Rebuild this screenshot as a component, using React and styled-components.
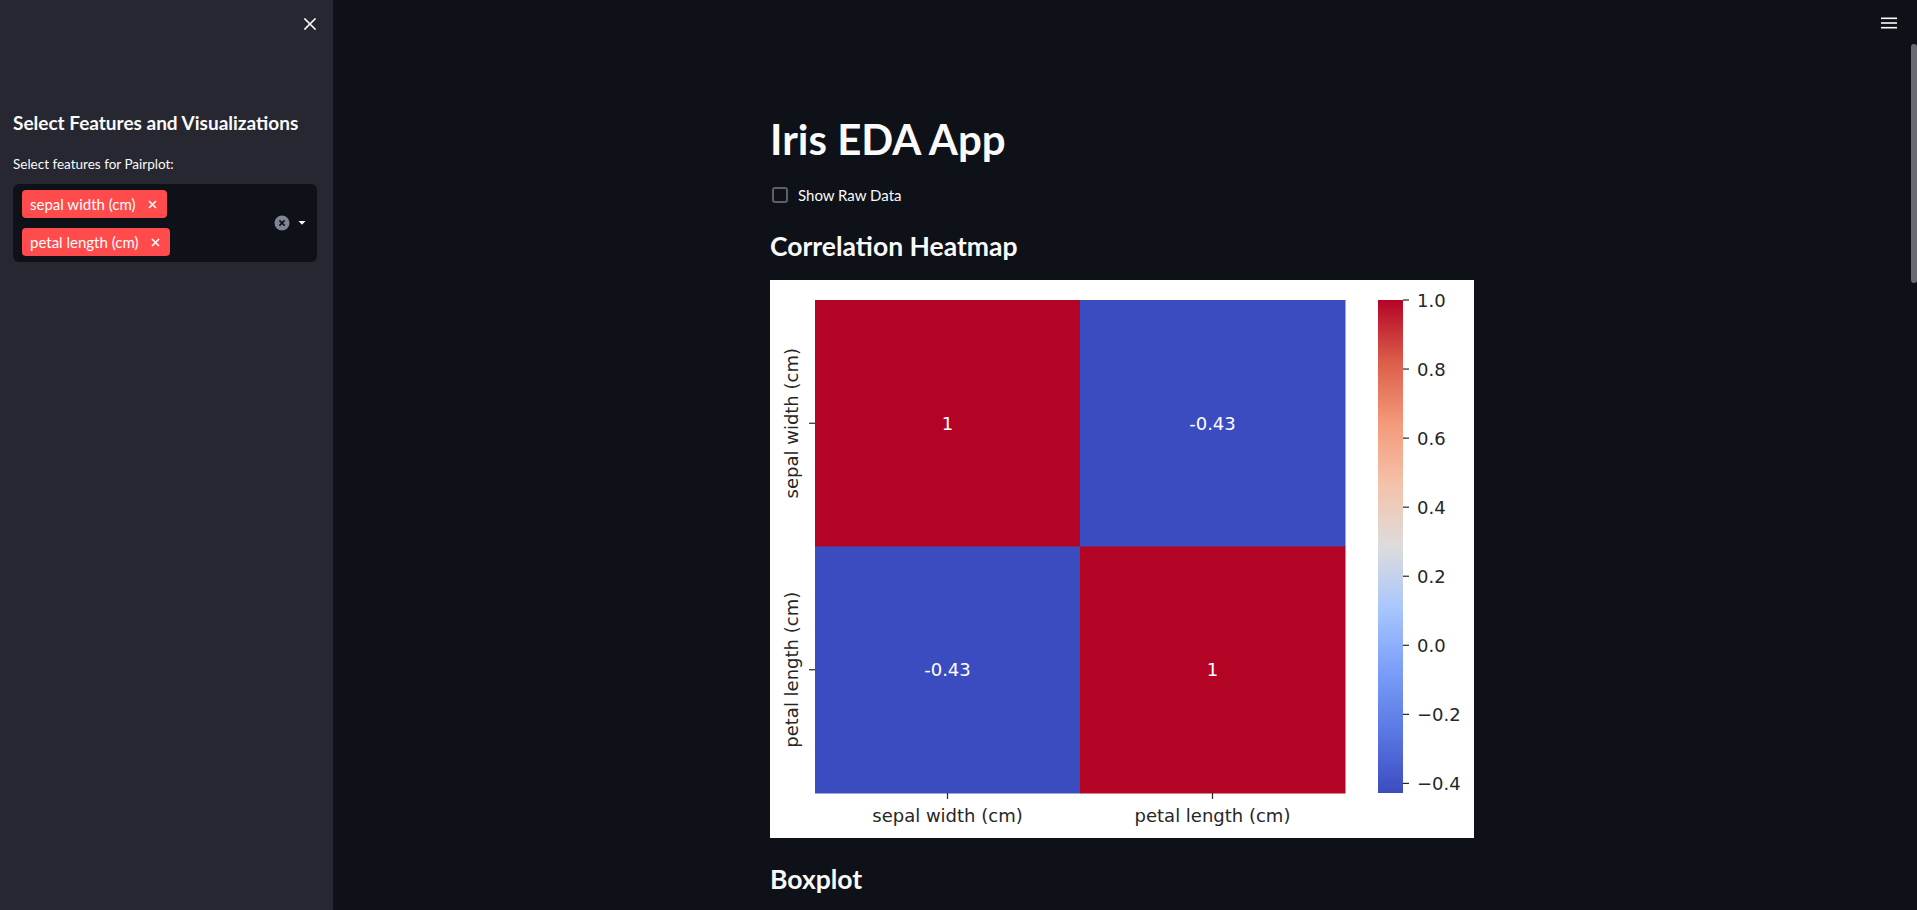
import React from 'react';
import styled, { createGlobalStyle } from 'styled-components';

const FEATURES = ['sepal width (cm)', 'petal length (cm)'];
const CORR = [
  [1, -0.43],
  [-0.43, 1],
];
const RED = '#b40426';
const BLUE = '#3b4cc0';
const VMIN = -0.4278;
const VMAX = 1;

// chart geometry, in the figure's own pixels (704 x 558)
const PLOT = { x0: 45, x1: 575, y0: 20, y1: 513 };
const BAR = { x0: 608, x1: 633 };
const BAR_TICKS = [1.0, 0.8, 0.6, 0.4, 0.2, 0.0, -0.2, -0.4];
const FONT = 18;

const GlobalStyle = createGlobalStyle`
  html, body {
    margin: 0;
    padding: 0;
    height: 100%;
    overflow: hidden;
    background: #0e1117;
  }
  body {
    font-family: Lato, "Noto Sans", sans-serif;
    color: #fafafa;
  }
`;

const cellColor = (v) => (v > 0.5 ? RED : BLUE);
const barY = (v) => PLOT.y0 + ((VMAX - v) / (VMAX - VMIN)) * (PLOT.y1 - PLOT.y0);
const fmtTick = (v) => (v < 0 ? '\u2212' + Math.abs(v).toFixed(1) : v.toFixed(1));

const Heatmap = () => {
  const cw = (PLOT.x1 - PLOT.x0) / FEATURES.length;
  const ch = (PLOT.y1 - PLOT.y0) / FEATURES.length;
  return (
    <ChartSvg viewBox="0 0 704 558" width="704" height="558">
      <defs>
        <linearGradient id="coolwarm" x1="0" y1="1" x2="0" y2="0">
          <stop offset="0" stopColor="#3b4cc0" />
          <stop offset="0.125" stopColor="#5a78e4" />
          <stop offset="0.25" stopColor="#7b9ff9" />
          <stop offset="0.375" stopColor="#a9c6fd" />
          <stop offset="0.5" stopColor="#dddcdc" />
          <stop offset="0.625" stopColor="#f5c2aa" />
          <stop offset="0.75" stopColor="#f49a7b" />
          <stop offset="0.875" stopColor="#dc5d4a" />
          <stop offset="1" stopColor="#b40426" />
        </linearGradient>
      </defs>
      <rect x="0" y="0" width="704" height="558" fill="#ffffff" />
      {CORR.map((row, r) =>
        row.map((v, c) => (
          <g key={`${r}-${c}`}>
            <rect
              x={PLOT.x0 + c * cw}
              y={PLOT.y0 + r * ch}
              width={cw + 0.5}
              height={ch + 0.5}
              fill={cellColor(v)}
            />
            <text
              x={PLOT.x0 + c * cw + cw / 2}
              y={PLOT.y0 + r * ch + ch / 2}
              fill="#ffffff"
              fontSize={FONT}
              textAnchor="middle"
              dominantBaseline="central"
            >
              {v === 1 ? '1' : v.toFixed(2)}
            </text>
          </g>
        ))
      )}
      {FEATURES.map((f, i) => {
        const cx = PLOT.x0 + i * cw + cw / 2;
        const cy = PLOT.y0 + i * ch + ch / 2;
        return (
          <g key={f}>
            <line x1={PLOT.x0 - 6} x2={PLOT.x0} y1={cy} y2={cy} stroke="#262626" strokeWidth="1.2" />
            <text
              transform={`translate(21 ${cy}) rotate(-90)`}
              textAnchor="middle"
              dominantBaseline="central"
              fontSize={FONT}
              fill="#262626"
            >
              {f}
            </text>
            <line x1={cx} x2={cx} y1={PLOT.y1} y2={PLOT.y1 + 6} stroke="#262626" strokeWidth="1.2" />
            <text x={cx} y={PLOT.y1 + 29} textAnchor="middle" fontSize={FONT} fill="#262626">
              {f}
            </text>
          </g>
        );
      })}
      <rect
        x={BAR.x0}
        y={PLOT.y0}
        width={BAR.x1 - BAR.x0}
        height={PLOT.y1 - PLOT.y0}
        fill="url(#coolwarm)"
      />
      {BAR_TICKS.map((t) => (
        <g key={t}>
          <line x1={BAR.x1} x2={BAR.x1 + 6} y1={barY(t)} y2={barY(t)} stroke="#262626" strokeWidth="1.2" />
          <text
            x={BAR.x1 + 14}
            y={barY(t)}
            fontSize={FONT}
            fill="#262626"
            dominantBaseline="central"
          >
            {fmtTick(t)}
          </text>
        </g>
      ))}
    </ChartSvg>
  );
};

const CloseIcon = () => (
  <svg width="12" height="12" viewBox="0 0 12 12">
    <path d="M1 1L11 11M11 1L1 11" stroke="#fafafa" strokeWidth="1.6" strokeLinecap="square" />
  </svg>
);

const MenuIcon = () => (
  <svg width="16" height="12" viewBox="0 0 16 12">
    <rect x="0" y="0.5" width="16" height="1.6" fill="#fafafa" />
    <rect x="0" y="5.2" width="16" height="1.6" fill="#fafafa" />
    <rect x="0" y="9.9" width="16" height="1.6" fill="#fafafa" />
  </svg>
);

const TagX = () => (
  <svg width="9" height="9" viewBox="0 0 9 9">
    <path d="M1 1L8 8M8 1L1 8" stroke="#ffffff" strokeWidth="1.6" />
  </svg>
);

const ClearIcon = () => (
  <svg width="16" height="16" viewBox="0 0 16 16">
    <circle cx="8" cy="8" r="7.5" fill="#808495" />
    <path d="M5.4 5.4L10.6 10.6M10.6 5.4L5.4 10.6" stroke="#0e1117" strokeWidth="1.6" />
  </svg>
);

const CaretIcon = () => (
  <svg width="10" height="6" viewBox="0 0 10 6">
    <path d="M1.5 1H8.5L5 4.8Z" fill="#fafafa" />
  </svg>
);

const App = () => {
  return (
    <>
      <GlobalStyle />
      <Page>
        <Sidebar>
          <SidebarTop>
            <IconButton aria-label="Close sidebar">
              <CloseIcon />
            </IconButton>
          </SidebarTop>
          <SidebarBody>
            <SidebarHeading>Select Features and Visualizations</SidebarHeading>
            <WidgetLabel>Select features for Pairplot:</WidgetLabel>
            <MultiSelect>
              <Tags>
                {FEATURES.map((f) => (
                  <Tag key={f}>
                    {f}
                    <TagX />
                  </Tag>
                ))}
              </Tags>
              <SelectControls>
                <ClearIcon />
                <CaretIcon />
              </SelectControls>
            </MultiSelect>
          </SidebarBody>
        </Sidebar>
        <Main>
          <TopBar>
            <IconButton aria-label="Menu">
              <MenuIcon />
            </IconButton>
          </TopBar>
          <Block>
            <Title>Iris EDA App</Title>
            <CheckRow>
              <CheckBox />
              <CheckLabel>Show Raw Data</CheckLabel>
            </CheckRow>
            <Subheader>Correlation Heatmap</Subheader>
            <Heatmap />
            <Subheader $gap={24}>Boxplot</Subheader>
          </Block>
          <ScrollThumb />
        </Main>
      </Page>
    </>
  );
};

const Page = styled.div`
  display: flex;
  height: 100vh;
  overflow: hidden;
`;

const Sidebar = styled.aside`
  width: 333px;
  flex-shrink: 0;
  background: #262730;
  display: flex;
  flex-direction: column;
`;

const SidebarTop = styled.div`
  flex-shrink: 0;
  display: flex;
  justify-content: flex-end;
  padding: 12px 11px 0 0;
`;

const IconButton = styled.button`
  width: 24px;
  height: 24px;
  padding: 0;
  border: none;
  background: transparent;
  display: flex;
  align-items: center;
  justify-content: center;
  cursor: pointer;
`;

const SidebarBody = styled.div`
  flex-shrink: 0;
  padding: 0 16px 0 13px;
`;

const SidebarHeading = styled.h2`
  margin: 75px 0 0;
  font-size: 19px;
  line-height: 24px;
  font-weight: 700;
  color: #fafafa;
`;

const WidgetLabel = styled.p`
  margin: 21px 0 0;
  font-size: 13.5px;
  line-height: 17px;
  color: #fafafa;
`;

const MultiSelect = styled.div`
  margin-top: 11px;
  width: 304px;
  box-sizing: border-box;
  background: #0e1117;
  border-radius: 6px;
  padding: 6px 10px 6px 9px;
  display: flex;
  align-items: center;
  justify-content: space-between;
`;

const Tags = styled.div`
  display: flex;
  flex-direction: column;
  align-items: flex-start;
  gap: 10px;
`;

const Tag = styled.span`
  height: 28px;
  box-sizing: border-box;
  padding: 0 10px 0 8px;
  display: inline-flex;
  align-items: center;
  gap: 12px;
  background: #ff4b4b;
  border-radius: 4px;
  color: #ffffff;
  font-size: 15px;
`;

const SelectControls = styled.div`
  display: flex;
  align-items: center;
  gap: 7px;
`;

const Main = styled.main`
  position: relative;
  flex: 1;
  padding-right: 6px;
  display: flex;
  flex-direction: column;
  overflow: hidden;
`;

const TopBar = styled.div`
  flex-shrink: 0;
  height: 46px;
  display: flex;
  justify-content: flex-end;
  align-items: center;
  padding-right: 10px;
`;

const Block = styled.div`
  flex-shrink: 0;
  width: 704px;
  margin: 0 auto;
  padding-top: 67px;
  display: flex;
  flex-direction: column;
  align-items: flex-start;
`;

const Title = styled.h1`
  margin: 0;
  font-size: 42px;
  line-height: 52px;
  font-weight: 700;
  color: #fafafa;
`;

const CheckRow = styled.label`
  margin-top: 18px;
  height: 24px;
  display: flex;
  align-items: center;
  gap: 10px;
  padding-left: 2px;
`;

const CheckBox = styled.span`
  width: 16px;
  height: 16px;
  box-sizing: border-box;
  border: 2px solid #5d6068;
  border-radius: 3px;
`;

const CheckLabel = styled.span`
  font-size: 15px;
  color: #fafafa;
`;

const Subheader = styled.h3`
  margin: ${(p) => p.$gap ?? 22}px 0 17px;
  font-size: 26.5px;
  line-height: 34px;
  font-weight: 700;
  color: #fafafa;
`;

const ChartSvg = styled.svg`
  display: block;
  flex-shrink: 0;
  font-family: "DejaVu Sans", sans-serif;
`;

const ScrollThumb = styled.div`
  position: absolute;
  top: 44px;
  right: 0;
  width: 6px;
  height: 239px;
  border-radius: 3px;
  background: #6b6c72;
`;

export default App;
